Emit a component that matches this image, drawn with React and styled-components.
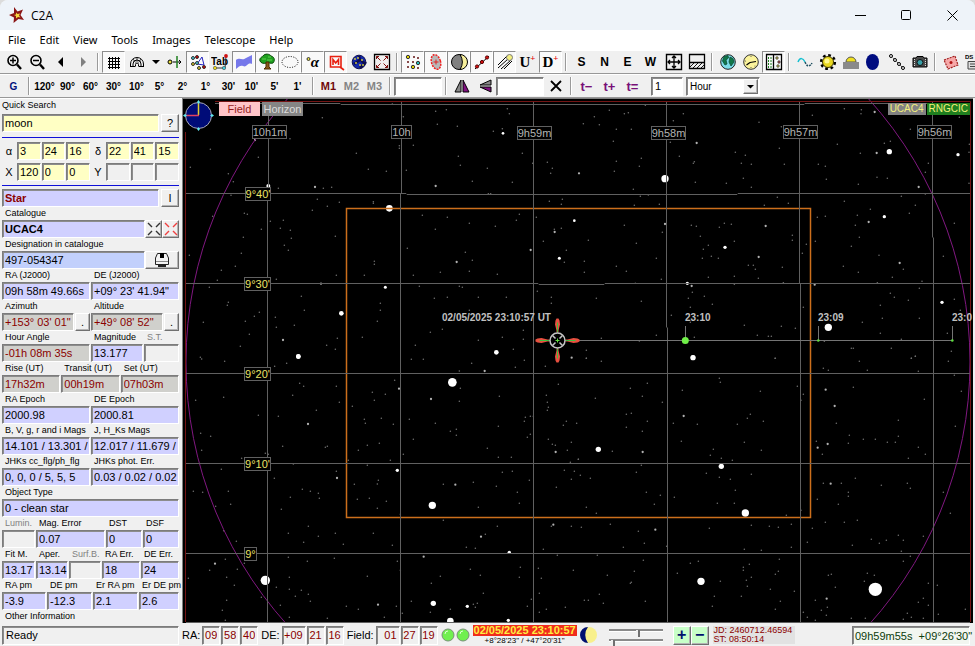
import React from "react";
import styled, { createGlobalStyle } from "styled-components";

const GlobalStyle = createGlobalStyle`
  * { box-sizing: border-box; }
  body {
    margin: 0;
    background-color: #dcdcdc;
    font-family: "Liberation Sans", Arial, sans-serif;
    font-size: 11px;
    color: #000;
  }
  button, input, select { font-family: inherit; margin: 0; }
`;

const Window = styled.div`
  display: grid;
  grid-template-rows: 30px 20px 24px 24px 1fr 22px;
  min-height: 100vh;
  background-color: #f0f0f0;
  border-radius: 8px 8px 0 0;
  overflow: hidden;
`;

const TitleBar = styled.header`
  display: flex;
  align-items: center;
  padding-left: 9px;
  background-color: #eef3f9;
`;

const Title = styled.h1`
  flex: 1;
  margin: 0 0 0 6px;
  font-family: "Open Sans", "Noto Sans", sans-serif;
  font-size: 12px;
  font-weight: 400;
`;

const Caption = styled.button`
  display: flex;
  align-items: center;
  justify-content: center;
  width: 46px;
  height: 30px;
  padding: 0;
  border: none;
  background: none;
`;

const MenuBar = styled.nav`
  display: flex;
  align-items: center;
  gap: 14px;
  padding-left: 8px;
  background-color: #fff;
`;

const MenuItem = styled.button`
  padding: 0;
  border: none;
  background: none;
  font-family: "Noto Sans", "Open Sans", sans-serif;
  font-size: 11px;
  line-height: 20px;
`;

const ToolBar = styled.div`
  display: flex;
  align-items: center;
  min-width: 0;
  padding-left: 2px;
  overflow: hidden;
  border-top: 1px solid #fff;
  border-bottom: 1px solid #989898;
`;

const ToolButton = styled.button`
  display: flex;
  flex: none;
  align-items: center;
  justify-content: center;
  width: ${p => (p.$narrow ? 15 : 23)}px;
  height: 22px;
  padding: 0;
  border: 1px solid;
  border-color: ${p => (p.$on ? "#8c8c8c #fff #fff #8c8c8c" : "transparent")};
  background-color: ${p => (p.$on ? "#f9f9f9" : "transparent")};
  color: ${p => p.$color || "#000"};
  font-size: ${p => p.$size || 10}px;
  font-weight: 700;
  white-space: nowrap;
  ${p => p.$serif && 'font-family: "Liberation Serif", serif;'}

  i { font-size: 15px; }
  sup {
    align-self: flex-start;
    color: #e00000;
    font-size: 9px;
    line-height: 12px;
  }
`;

const Separator = styled.span`
  flex: none;
  width: 2px;
  height: 18px;
  margin: 0 3px;
  border-left: 1px solid #9a9a9a;
  border-right: 1px solid #fff;
`;

const sunken = `
  border: 1px solid;
  border-color: #7c7c7c #fff #fff #7c7c7c;
  border-radius: 0;
  box-shadow: inset 1px 1px #8c8c8c;
`;

const raised = `
  border: 1px solid;
  border-color: #fff #707070 #707070 #fff;
  border-radius: 0;
  box-shadow: inset -1px -1px #b4b4b4;
`;

const ToolInput = styled.input`
  ${sunken}
  flex: none;
  width: ${p => p.$w}px;
  height: 19px;
  padding: 0 3px;
  font-size: 11px;
  background-color: #fff;
`;

const UnitPicker = styled.div`
  ${sunken}
  display: flex;
  flex: none;
  position: relative;
  width: 74px;
  height: 19px;
  margin-left: 3px;
  background-color: #fff;

  svg {
    ${raised}
    position: absolute;
    top: 1px;
    right: 1px;
    width: 15px;
    height: 15px;
    background-color: #f0f0f0;
    pointer-events: none;
  }
`;

const UnitSelect = styled.select`
  appearance: none;
  width: 100%;
  padding: 0 3px;
  border: none;
  background: none;
  font-size: 10px;
`;

const Gap = styled.span`
  flex: none;
  width: 7px;
`;

const Body = styled.div`
  display: grid;
  grid-template-columns: 182px 1fr;
`;

const Panel = styled.aside`
  padding: 0 3px 0 2px;
  border-top: 1px solid #fff;
`;

const Section = styled.section`
  padding-bottom: ${p => p.$pb}px;
  margin-bottom: ${p => p.$mb}px;
  border-bottom: 1px solid #1010d8;
`;

const Row = styled.div`
  display: grid;
  grid-template-columns: ${p => p.$cols || "1fr 1fr"};
  gap: ${p => p.$gap ?? 1}px;
  align-items: end;
`;

const CoordRow = styled(Row)`
  align-items: center;
  text-align: center;
  & + & { margin-top: 3px; }
`;

const Cell = styled.label`
  display: block;
  min-width: 0;
`;

const FieldName = styled.span`
  display: block;
  height: 13px;
  padding-left: 3px;
  font-size: 9px;
  line-height: 12px;
  white-space: nowrap;
  color: ${p => (p.$off ? "#808080" : "#000")};
`;

const SearchName = styled(FieldName)`
  height: 15px;
  padding-left: 0;
`;

const tones = {
  blue: "#d0d0ff",
  sky: "#c2d0fc",
  gray: "#d0d0cc",
  yellow: "#ffffc4",
  off: "#f0f0f0",
};

const Box = styled.input`
  ${sunken}
  display: block;
  width: 100%;
  min-width: 0;
  height: 18px;
  padding: 0 0 0 2px;
  font-size: 11px;
  font-weight: ${p => (p.$bold ? 700 : 400)};
  color: ${p => (p.$red ? "#8b0000" : "#000")};
  background-color: ${p => tones[p.$tone || "blue"]};
`;

const PushButton = styled.button`
  ${raised}
  display: flex;
  align-items: center;
  justify-content: center;
  width: 100%;
  height: 18px;
  padding: 0;
  font-size: 11px;
  background-color: #f0f0f0;
`;

const Sky = styled.main`
  position: relative;
  min-width: 0;
  margin: 0 2px 1px 0;
  border-left: 1px solid #808080;
  border-top: 1px solid #808080;
  background-color: #000;
`;

const Chart = styled.svg`
  position: absolute;
  inset: 0;
  width: 100%;
  height: 100%;
`;

const Overlay = styled.div`
  position: absolute;
  display: flex;
  gap: ${p => (p.$right ? 1 : 2)}px;
  ${p => (p.$right ? "right: 3px; top: 4px;" : "left: 36px; top: 3px;")}
`;

const SkyTab = styled.button`
  width: 41px;
  height: 14px;
  padding: 0;
  border: none;
  font-size: 11px;
  line-height: 14px;
  color: ${p => (p.$on ? "#941c1c" : "#dcdcdc")};
  background-color: ${p => (p.$on ? "#ffc4c8" : "#858585")};
`;

const Badge = styled.span`
  padding: 0 2px;
  font-size: 10px;
  line-height: 12px;
  color: #f4f07c;
  background-color: ${p => (p.$green ? "#1f7f1f" : "#828282")};
`;

const StatusBar = styled.footer`
  display: flex;
  align-items: center;
  min-width: 0;
  padding: 0 5px 0 2px;
  overflow: hidden;
  white-space: nowrap;
`;

const Ready = styled.div`
  ${sunken}
  flex: none;
  width: 177px;
  height: 19px;
  padding-left: 3px;
  line-height: 17px;
`;

const StatusGroup = styled.div`
  display: flex;
  flex: none;
  align-items: center;
  gap: 1px;
  margin-left: 3px;

  label { margin-right: 1px; }
`;

const StatusBox = styled(Box)`
  width: ${p => p.$w}px;
  height: 19px;
  text-align: right;
  padding: 0 2px 0 0;
`;

const Clock = styled.div`
  flex: none;
  width: 104px;
  margin-left: 3px;
  text-align: center;
  font-size: 8px;
  line-height: 9px;
`;

const ClockDate = styled.div`
  font-size: 11px;
  font-weight: 700;
  line-height: 11px;
  color: #ffee40;
  background-color: #f02c1c;
`;

const Sliders = styled.div`
  display: flex;
  flex: none;
  flex-direction: column;
  width: 54px;
  margin: 0 10px 0 11px;
`;

const Slider = styled.input`
  appearance: none;
  width: 100%;
  height: 10px;
  background: none;

  &::-webkit-slider-runnable-track {
    height: 3px;
    border-top: 2px solid #8a8a8a;
    border-bottom: 1px solid #fff;
  }
  &::-webkit-slider-thumb {
    appearance: none;
    width: 4px;
    height: 7px;
    margin-top: -1px;
    background-color: #f0f0f0;
    border-right: 2px solid #707070;
  }
`;

const StepButton = styled(PushButton)`
  flex: none;
  width: 18px;
  height: 19px;
  font-size: 16px;
  font-weight: 700;
  color: #00106c;
  background-color: #c8ffc8;
`;

const Julian = styled.div`
  flex: none;
  width: 82px;
  margin-left: 4px;
  padding-left: 1px;
  font-size: 9px;
  line-height: 9px;
  color: #8b0000;
  background-color: #e2e2e2;
`;

const Cursor = styled.output`
  ${sunken}
  flex: none;
  width: 118px;
  height: 19px;
  margin-left: auto;
  padding-left: 2px;
  line-height: 18px;
  color: #0c3c0c;
  background-color: #f2f6f0;
  white-space: pre;
`;

// ---- icons ----

const Icon = ({ children, size = 18 }) => (
  <svg width={size} height={size} viewBox="0 0 18 18" fill="none" stroke="#000" aria-hidden="true">
    {children}
  </svg>
);

const Dots = ({ pts, r = 1.5, fill, line = "none" }) =>
  pts.map(([x, y, f]) => <circle key={x + "-" + y} cx={x} cy={y} r={r} fill={f || fill} stroke={line} />);

const Logo = () => (
  <svg width="16" height="18" viewBox="0 0 16 18" aria-hidden="true">
    <path d="M5 1L8.500 5.500L14 3.500L11.500 9L15 14L9.500 13L4.500 17L5 11.500L0 9L5 7Z" fill="#8b1616" />
    <path d="M7 6.500L8.500 8L11 7.500L10 9.500L11.500 11.500L9 11L7 12.500L7 10L5 9L7 8.500Z" fill="#f5d940" />
  </svg>
);

const Zoom = ({ plus }) => (
  <Icon>
    <circle cx="8" cy="7.500" r="5" strokeWidth="1.600" />
    <path d="M12 11.500L16 16" strokeWidth="2.400" />
    <path d={plus ? "M5 7.500H11M8 4.500V10.500" : "M5 7.500H11"} strokeWidth="1.500" />
  </Icon>
);

const Grid = () => (
  <Icon><path d="M3 5.500H15M3 8.500H15M3 11.500H15M3 14.500H15M4.500 4V16M7.500 4V16M10.500 4V16M13.500 4V16" /></Icon>
);

const Dome = () => (
  <Icon>
    <path d="M2 13.500H7.500M10.500 13.500H16M2.500 13V11A6.500 6.500 0 0 1 15.500 11V13M5 13V11A4 4 0 0 1 13 11V13M7.500 13V11.500A1.500 1.500 0 0 1 10.500 11.500V13" />
    <path d="M9 5V9M5 6L7.500 9.500M13 6L10.500 9.500" strokeWidth="0.700" />
  </Icon>
);

const Constellation = () => (
  <Icon>
    <path d="M8 11L13 4L15 12L8 11" stroke="#2020c0" />
    <Dots pts={[[4, 5, "#40c8d8"], [8, 4, "#c00"], [4, 11, "#d8c820"], [10, 15, "#d8c820"], [15, 14, "#c00"], [8, 10, "#40c8d8"]]} r={1.5} line="#333" />
  </Icon>
);

const Tab = () => (
  <svg width="19" height="18" viewBox="0 0 19 18" aria-hidden="true">
    <text x="0" y="12" fontSize="10" fontWeight="700" fontFamily="Liberation Sans">Tab</text>
    <path d="M4 15H14L15 3" stroke="#333" fill="none" />
    <circle cx="4" cy="15" r="1.700" fill="#e8d820" stroke="#333" strokeWidth="0.500" />
    <circle cx="13" cy="15" r="1.700" fill="#40c8d8" stroke="#333" strokeWidth="0.500" />
    <circle cx="15" cy="3" r="1.900" fill="#d01010" />
  </svg>
);

const Flag = () => (
  <Icon><path d="M1 7C5 4 7 8 11 5L17 2V11C12 9 12 15 8 13C6 12 4 13 1 16Z" fill="#7678ea" stroke="none" /></Icon>
);

const Tree = () => (
  <Icon>
    <path d="M2 8C1 5 4 4 5 3C7 0 12 1 13 3C17 4 17 8 15 10C12 11 11 9 9 10C5 11 3 10 2 8Z" fill="#1fa01f" stroke="#0a4a0a" />
    <path d="M8 9H11V14L13 16H6L8 14Z" fill="#8a5a18" stroke="#4a2a00" />
    <path d="M4 6H8M10 4H13M9 7H14" stroke="#60d050" />
  </Icon>
);

const MFrame = () => (
  <Icon>
    <path d="M3.500 3.500H14V14H3.500ZM13 14L17 17" stroke="#e82010" strokeWidth="1.600" />
    <path d="M6 12V6.500L8.700 10L11.500 6.500V12" stroke="#e82010" strokeWidth="1.600" />
  </Icon>
);

const NightSky = () => (
  <Icon>
    <circle cx="9" cy="9" r="6.800" fill="#1428a8" stroke="#101050" />
    <path d="M4 11L10 7L9 3M11 8L15 10L10 15" stroke="#0c0c50" strokeWidth="2.500" />
    <Dots pts={[[5, 6], [8, 5], [12, 7], [6, 10], [10, 12], [13, 12]]} r={0.9} fill="#e0d840" />
  </Icon>
);

const Expand = () => (
  <Icon>
    <path d="M1.500 1.500H16.500V16.500H1.500Z" strokeWidth="1.300" />
    <path d="M3.500 6V3.500H6M3.500 3.500L7.500 7.500M12 3.500H14.500V6M14.500 3.500L10.500 7.500M3.500 12V14.500H6M3.500 14.500L7.500 10.500M12 14.500H14.500V12M14.500 14.500L10.500 10.500" stroke="#801010" />
  </Icon>
);

const Rays = ({ color }) => (
  <svg width="14" height="14" viewBox="0 0 14 14" stroke={color} strokeWidth="1.400" aria-hidden="true">
    <path d="M1 1L5 5M13 1L9 5M1 13L5 9M13 13L9 9" />
  </svg>
);

const StarField = () => (
  <Icon>
    <Dots pts={[[4, 4, "#e0d000"], [14, 10, "#20b8b8"], [9, 14, "#e0d000"]]} r={1.7} line="#333" />
    <Dots pts={[[10, 4], [9, 9], [4, 9], [4, 14], [14, 15], [14, 5]]} r={1} fill="#601010" />
  </Icon>
);

const Galaxy = () => (
  <Icon>
    <ellipse cx="9" cy="9" rx="4.500" ry="7.500" transform="rotate(-16 9 9)" fill="#b8b8b8" stroke="#f02020" strokeDasharray="2 1" strokeWidth="1.500" />
    <path d="M9 6.500V11.500M6.500 9H11.500" stroke="#e02020" />
  </Icon>
);

const Phase = () => (
  <Icon>
    <circle cx="9" cy="9" r="7.500" fill="#808080" />
    <path d="M10 1.500A7.500 7.500 0 0 1 10 16.500A14 14 0 0 0 10 1.500Z" fill="#f8f09c" />
  </Icon>
);

const Trail = ({ plain }) => (
  <Icon>
    {plain ? (
      <>
        <path d="M2 2L16 16" strokeDasharray="1 1" />
        <Dots pts={[[3, 3], [7, 7], [11, 11], [15, 15]]} r={1.5} fill="#f0f0f0" line="#000" />
      </>
    ) : (
      <>
        <path d="M2 16L16 3" />
        <Dots pts={[[4, 13.5], [9, 9], [14, 4.5]]} r={1.6} fill="#e01010" line="#500" />
      </>
    )}
  </Icon>
);

const Comet = () => (
  <Icon>
    <path d="M2 12L11 3M2 15L12 6M5 16L15 7M8 16L16 8" />
    <circle cx="13.500" cy="4.500" r="3" fill="#f4f080" stroke="#777" />
  </Icon>
);

const Pan = () => (
  <Icon>
    <path d="M1.500 1.500H16.500V16.500H1.500Z" strokeWidth="1.400" />
    <path d="M9 3V15M3 9H15M7 5L9 3L11 5M7 13L9 15L11 13M5 7L3 9L5 11M13 7L15 9L13 11" strokeWidth="1.300" />
  </Icon>
);

const Horizon = () => (
  <Icon>
    <path d="M1.500 1.500H16.500V15.500H1.500ZM1.500 9.500H16.500" strokeWidth="1.300" />
    <path d="M2 14L6 10M5 15L10 10M9 15L14 10M13 15L16 12" strokeWidth="0.900" />
  </Icon>
);

const Globe = () => (
  <Icon>
    <circle cx="9" cy="9" r="7.300" fill="#7cdce8" stroke="#222" />
    <path d="M5 3.500L9 2.500L9.500 5L7 7L8 11L6 12L3.500 8ZM11 4L14 5.500L15 9L12 13L10 9Z" fill="#107848" stroke="#0c4c38" strokeWidth="0.800" />
  </Icon>
);

const ClockIcon = () => (
  <Icon>
    <circle cx="9" cy="9" r="7.300" fill="#fcf49c" stroke="#333" />
    <path d="M8 9.500L14 8.500M8 9.500L4.500 12" strokeWidth="1.200" />
    <Dots pts={[[9, 3.5], [9, 14.5], [3.5, 8], [13, 13]]} r={0.6} fill="#555" />
  </Icon>
);

const PanelIcon = () => (
  <Icon>
    <path d="M1.500 1.500H16.500V16.500H1.500ZM8.500 2V16" strokeWidth="1.300" />
    <path d="M3.500 4V15M6 4V15" stroke="#208020" strokeDasharray="2 1" />
    <Dots pts={[[12, 5, "#d8c820"], [14, 9, "#b01010"], [13, 13, "#d8c820"]]} r={1.2} line="#555" />
  </Icon>
);

const Curve = () => (
  <Icon>
    <path d="M2 9C4 4 7 5 9 9" stroke="#18c0d0" strokeWidth="1.500" />
    <path d="M9 9C11 14 14 14 16 10" stroke="#205060" strokeDasharray="2 1" strokeWidth="1.500" />
  </Icon>
);

const Sun = () => (
  <Icon>
    <circle cx="9" cy="9" r="6.800" strokeWidth="2.600" strokeDasharray="2.700 2.640" />
    <circle cx="9" cy="9" r="5.500" fill="#e8d820" stroke="#403800" />
    <circle cx="8" cy="8" r="2.500" fill="#fff890" stroke="none" />
  </Icon>
);

const Sunrise = () => (
  <Icon>
    <path d="M4 9A5 5 0 0 1 14 9Z" fill="#f0e020" stroke="#555" />
    <path d="M1 9H17V16H1Z" fill="#8a8a8a" stroke="none" />
  </Icon>
);

const Night = () => (
  <Icon><ellipse cx="7.500" cy="9" rx="6.500" ry="8" fill="#000c80" stroke="none" /></Icon>
);

const Camera = () => (
  <Icon>
    <path d="M2 5H5L6 3.500H12L13 5H16V14H2Z" fill="#4a4a4a" />
    <path d="M3.500 6V13M14.500 6V13" stroke="#ddd" strokeDasharray="1 1" />
    <circle cx="9" cy="9.500" r="3" fill="#38a0a8" stroke="#111" />
  </Icon>
);

const Ccd = () => (
  <Icon>
    <path d="M2 7L13 3L16 12L6 16Z" fill="#f6a8a8" stroke="#a02020" strokeDasharray="2 1" strokeWidth="1.200" />
    <circle cx="9" cy="9.500" r="1.500" fill="#b01010" stroke="none" />
  </Icon>
);

const Dss = () => (
  <Icon>
    <text x="0" y="6" fontSize="6" fontWeight="700" fill="#000" stroke="none">DS</text>
    <path d="M3 8.500H15V16H3ZM5 11H13M5 13.500H13" fill="#ddd" stroke="#444" />
  </Icon>
);

const FlipH = () => (
  <Icon>
    <path d="M8 3V15H2Z" fill="#888" />
    <path d="M10 3V15H16Z" fill="#801080" />
  </Icon>
);

const FlipV = () => (
  <Icon>
    <path d="M15 3V8H4Z" fill="#888" />
    <path d="M15 15V10H4Z" fill="#801080" />
  </Icon>
);

const Printer = () => (
  <svg width="18" height="16" viewBox="0 0 18 16" aria-hidden="true">
    <path d="M4.500 1.500H13.500L15.500 6V12.500H2.500V6Z" fill="#f4f4f4" stroke="#222" />
    <path d="M7 1H11V6H7Z" fill="#000" />
    <path d="M3 9.500H15" stroke="#888" />
    <path d="M5 14H13" stroke="#222" strokeWidth="2" />
  </svg>
);

const MoonPhase = () => (
  <svg width="18" height="18" viewBox="0 0 18 18" aria-hidden="true">
    <circle cx="9" cy="9" r="8" fill="#f8f08c" />
    <path d="M8 1A8 8 0 0 0 8 17A13 13 0 0 1 8 1Z" fill="#001070" />
  </svg>
);

const Lamp = () => (
  <svg width="14" height="14" viewBox="0 0 14 14" aria-hidden="true">
    <circle cx="7" cy="7" r="6" fill="#70f050" stroke="#789078" />
    <path d="M4 6A3 3 0 0 1 7 3" stroke="#e0ffd8" fill="none" />
  </svg>
);

// ---- sky chart ----

// Four plates, three units to a chart pixel
const plates = [
  {
    at: [180, 96],
    faint: "427,65 330,128 91,160 235,184 31,214 145,233 160,257 153,298 295,277 430,277 455,274 412,310 442,331 478,319 397,343 193,352 202,355 271,376 310,373 98,361 244,400 301,397 331,403 334,427 190,424 313,448 325,463 184,472 28,478 166,511 124,523 112,553 289,550 88,574 364,601 145,619 142,628 238,649 223,661 286,664 70,679 196,676 289,694 343,688 208,715 181,751 61,784 373,643 469,538 466,421 529,172 565,220 619,226 679,223 700,148 658,149 658,157 767,46 799,41 772,85 832,91 982,38 988,53 940,106 967,98 835,181 841,208 922,217 877,256 997,259 1027,172 1102,199 1117,217 1058,202 1112,232 580,317 580,322 727,358 802,364 868,382 766,400 946,391 1018,355 1009,373 1069,364 1108,316 1147,310 1144,325 1090,436 1144,397 682,457 583,496 583,505 856,469 877,493 781,529 868,526 952,535 553,538 700,538 718,571 763,607 802,604 838,571 847,574 895,604 979,604 1072,586 1159,463 1153,499 1114,604 601,622 601,643 592,676 547,724 472,727 440,748 466,760 787,700 751,709 706,748 868,643 895,733 967,724 1030,703 1030,730 1000,760 1114,622 670,62 637,24 925,293 932,293 1123,400",
    mid: "225,132 405,273 767,270 830,498 1124,408 1052,462 423,563 309,732 1175,785",
    bright: "969,112,4 265,270,6 628,337,10 616,574,4.500 484,652,7 355,781,7 949,769,7 1138,487,4.500 1183,374,4",
  },
  {
    at: [575, 96],
    faint: "103,43 148,53 160,50 58,62 25,83 73,86 124,100 169,100 295,74 325,53 211,28 115,136 286,139 313,181 355,202 358,197 199,187 193,211 124,196 118,226 361,259 175,280 196,301 178,328 253,325 220,297 552,79 712,58 619,92 613,157 481,169 511,178 499,202 529,205 628,205 454,262 505,247 529,274 568,328 607,304 640,322 730,205 751,211 787,145 754,250 808,38 859,41 858,53 1006,100 928,142 946,136 856,172 906,244 937,247 850,265 1060,202 1051,229 1051,294 1183,145 1182,169 1182,262 1153,64 808,316 979,301 1021,328 1003,352 847,358 841,388 886,340 751,361 727,364 853,424 829,451 912,478 805,511 850,529 985,520 952,544 907,560 1041,556 1138,382 1105,481 349,388 364,391 433,394 448,382 469,385 376,421 478,436 400,448 385,460 382,487 409,481 430,487 520,508 535,508 541,520 550,547 478,541 478,565 400,544 622,514 652,418 652,433 694,445 721,436 682,472 625,560 40,433 184,442 148,388 28,496 28,529 124,511 154,526 259,550 181,562 244,487 262,409 64,607 199,616 289,658 244,718 352,589 340,607 388,601 412,625 346,634 346,679 79,727 358,724 508,688 547,718 580,721 589,721 619,691 661,697 685,634 916,628 946,592 958,604 1000,613 922,667 862,679 916,712 979,730 949,757 829,757 835,757 1033,577 1033,667 1138,610 1156,643 1117,712 1129,766 1021,781 1009,787 34,763 34,787 600,787 748,736 193,735",
    mid: "12,232 365,141 270,384 572,390 551,483 350,570 899,48 905,171 1031,273 881,378 974,501 719,566",
    bright: "270,248,11 943,167,8 1149,176,5 928,362,5 450,454,5 337,562,5 1101,619,5 760,694,11 354,785,7",
  },
  {
    at: [180, 355],
    faint: "65,12 134,19 320,25 284,34 359,85 371,94 338,121 469,94 409,166 478,142 47,136 131,127 235,181 295,184 62,235 92,244 65,286 308,274 436,277 442,274 256,295 265,298 185,310 124,343 145,409 68,412 40,409 152,448 107,454 283,370 367,403 391,409 415,415 418,430 331,427 304,463 469,349 340,327 385,514 325,535 415,544 371,562 466,535 490,568 325,607 382,619 463,610 131,527 169,559 136,613 193,625 89,646 172,643 25,670 140,667 163,691 328,667 289,697 328,703 364,706 346,724 385,718 391,739 244,727 140,736 127,766 301,751 328,787 136,796 442,790 499,754 535,763 694,13 730,13 875,25 838,48 1006,37 1033,16 1096,34 958,124 838,139 841,100 644,76 616,118 577,112 583,136 517,154 553,193 556,205 604,190 640,208 688,193 766,205 811,229 829,223 829,241 700,253 670,298 562,271 598,265 535,286 562,331 631,316 505,316 523,388 532,433 568,430 619,439 592,460 595,376 592,387 790,388 880,382 949,394 967,352 997,349 955,307 994,307 922,280 955,214 1036,187 1033,199 1051,184 1060,184 1051,238 1042,247 1105,253 1117,268 1126,271 1150,211 1159,199 1162,286 1174,262 1171,322 1153,346 1183,349 1129,397 1048,376 1012,412 1018,445 895,457 790,496 952,514 580,535 637,571 652,619 661,646 859,577 886,580 916,538 871,643 901,661 781,664 754,685 562,664 910,715 1018,667 1021,637 1090,583 1132,601 1084,670 1075,640 1078,715 1054,733 1180,646 1099,763 1078,772 1156,757 1042,754 880,748 892,745 886,757 811,763 751,772 694,739 649,754 667,775 613,787 1174,514 1114,514 1099,121 1102,142 1105,157 1102,166 1135,88 1190,205 1195,313 1174,373 661,478",
    mid: "384,207 471,369 105,626 657,101 914,48 753,132 1127,291 826,389 903,545 731,605 594,749 1120,509",
    bright: "355,5,7 817,82,13 652,346,5 757,451,11 256,676,14 760,745,8 862,754,5 811,798,10 988,592,5 985,796,5",
  },
  {
    at: [575, 355],
    faint: "34,10 79,19 601,10 166,100 217,85 202,124 262,142 61,130 154,178 169,175 154,217 217,199 202,229 112,289 10,313 199,331 184,352 16,361 46,370 214,412 256,421 238,448 34,457 64,475 106,508 19,517 190,529 208,565 145,577 275,574 67,601 205,616 178,649 97,661 166,685 169,682 73,718 85,745 28,736 40,736 211,739 433,70 436,82 322,106 556,109 667,94 685,118 678,136 526,178 517,190 565,199 487,208 367,208 295,205 319,259 508,262 559,286 415,283 406,301 439,310 472,316 394,355 433,367 466,373 529,358 481,406 427,445 478,445 298,427 634,481 678,466 403,520 529,511 583,514 610,517 649,508 712,520 697,562 649,577 508,583 559,586 346,625 370,619 307,655 505,637 505,646 523,628 529,667 514,676 517,694 499,724 586,703 601,658 610,649 613,613 658,709 616,739 601,763 418,724 412,754 436,679 853,19 745,40 760,46 877,46 1009,10 1021,4 1030,49 1120,19 1138,61 1159,109 1141,214 1048,133 835,97 784,205 823,241 820,265 865,253 901,253 937,262 961,262 970,244 970,196 1030,277 1051,298 1000,310 742,298 724,259 841,370 799,385 745,385 820,412 820,424 727,433 790,448 919,391 997,385 1006,400 1105,412 1126,475 847,496 808,502 751,502 832,571 889,553 913,565 934,556 970,541 985,556 1045,544 979,589 1006,604 985,619 877,655 898,661 868,679 769,658 760,661 781,697 721,736 739,766 757,757 754,781 685,772 1060,685 1087,691 1045,730 1060,751 1030,742 1090,778 997,775 1009,787 1171,763 985,793 829,790 871,790 697,787 721,796 1045,790",
    mid: "326,183 203,291 752,104 779,153 758,267 728,278 767,386 241,524 755,731",
    bright: "354,8,8 70,283,8 439,334,8 511,474,11 378,679,11 901,703,20",
  },
];

const Plate = ({ at, faint, mid, bright }) => (
  <g transform={`translate(${at[0]} ${at[1]}) scale(${1 / 3})`}>
    {faint.split(" ").map(s => {
      const [x, y] = s.split(",");
      return <circle key={s} cx={x} cy={y} r="2.300" fill="#707070" />;
    })}
    {mid.split(" ").map(s => {
      const [x, y] = s.split(",");
      return <circle key={s} cx={x} cy={y} r="3.400" fill="#b0b0b0" />;
    })}
    {bright.split(" ").map(s => {
      const [x, y, r] = s.split(",");
      return <circle key={s} cx={x} cy={y} r={r} fill="#fff" />;
    })}
  </g>
);

const raLabels = [
  ["10h1m", 252, 125, 35], ["10h", 391, 125, 21], ["9h59m", 517, 126, 35],
  ["9h58m", 651, 126, 35], ["9h57m", 783, 125, 35], ["9h56m", 917, 125, 35],
];

const decLabels = [
  ["9°40'", 245, 187, 26], ["9°30'", 244, 277, 27], ["9°20'", 244, 367, 27],
  ["9°10'", 244, 457, 27], ["9°", 244, 547, 13],
];

const Tag = ({ label: [text, x, y, w], fill }) => (
  <g>
    <rect x={x + 0.5} y={y + 0.5} width={w - 1} height="13" fill="#000" stroke="#606060" />
    <text x={x + w / 2} y={y + 11} textAnchor="middle" fontSize="11" fill={fill}>{text}</text>
  </g>
);

const SkyChart = () => (
  <Chart viewBox="183 99 790 524" preserveAspectRatio="xMidYMid slice" role="img" aria-label="Sky chart">
    {plates.map(p => <Plate key={p.at.join()} {...p} />)}
    <circle cx="578" cy="362" r="392" fill="none" stroke="#801880" />
    <path d="M346.500 208.500H810.500V517.500H346.500Z" fill="none" stroke="#cc6f1c" strokeWidth="1.500" />
    <g fill="none" stroke="#606060">
      <path d="M268.500 102V193.500L267.500 194V622M401.500 102V193.500L400.500 194V622M533.500 102V622M666.500 102V327L667.500 328V622M799.500 102V283L800.500 284V622M932.500 102V237L933.500 238V622" />
      <path d="M215 103.500H340L341 104.500H804L805 103.500H970M186 193.500H406L407 194.500H737L738 193.500H970M186 283.500H538L539 284.500H604L605 283.500H970M186 373.500H970M186 463.500H970M186 553.500H970M186 622.500H970" />
      <path d="M578 340.500H953M685.500 326V340M818.500 326V340M952.500 326V340" stroke="#747474" />
    </g>
    <path d="M185.500 132V622M215 101.500H970.500V622" fill="none" stroke="#741414" />
    {raLabels.map(l => <Tag key={l[0]} label={l} fill="#b4b4b4" />)}
    {decLabels.map(l => <Tag key={l[0]} label={l} fill="#ece468" />)}

    <g fontSize="10" fontWeight="700" fill="#c0c0c0">
      <text x="442" y="321">02/05/2025 23:10:57 UT</text>
      <text x="685" y="321">23:10</text>
      <text x="818" y="321">23:09</text>
      <text x="952" y="321">23:0</text>
    </g>
    <circle cx="685.300" cy="340.500" r="3.500" fill="#70f048" />
    <circle cx="818.300" cy="340.500" r="1.300" fill="#60e040" />
    <circle cx="952.300" cy="340.500" r="1.300" fill="#60e040" />

    <g transform="translate(557.500 340.500)">
      {[0, 90, 180, 270].map(a => (
        <g key={a} transform={`rotate(${a})`}>
          <path d="M-2.500 -16L-2 -20L-1 -22H1L2 -20L2.500 -16L1 -10V-8H-1V-10Z" fill="#e85040" />
          <path d="M0 -18V-8" stroke="#40c040" />
        </g>
      ))}
      <circle r="7.500" fill="#000" stroke="#c4c4c4" strokeWidth="1.500" />
      <path d="M-5 -5L-2 -2M5 -5L2 -2M-5 5L-2 2M5 5L2 2" stroke="#c4c4c4" strokeWidth="1.500" />
      <path d="M-2 0H2M0 -2V2" stroke="#60e040" />
    </g>

    <g>
      <circle cx="198.500" cy="115.500" r="13" fill="#000c78" stroke="#a8a8b8" />
      <path d="M198.500 103V115" stroke="#e0d030" strokeWidth="1.500" />
      <path d="M186 115.500H199" stroke="#e04060" strokeWidth="1.500" />
      <path d="M198.500 100L200 102L198.500 104L197 102ZM198.500 127L200 129L198.500 131L197 129ZM183 115.500L185 114L187 115.500L185 117ZM210 115.500L212 114L214 115.500L212 117Z" fill="#60e8f0" />
    </g>
  </Chart>
);

// ---- parts ----

const Tool = ({ name, children, on, ...rest }) => (
  <ToolButton type="button" aria-label={name} title={name} $on={on} {...rest}>{children}</ToolButton>
);

const Field = ({ label, value = "", tone, red, bold }) => (
  <Cell>
    <FieldName $off={tone === "off"}>{label}</FieldName>
    <Box defaultValue={value} readOnly $tone={tone} $red={red} $bold={bold} />
  </Cell>
);

const Coords = ({ sets }) => (
  <CoordRow $cols="14px 1fr 1fr 1fr 14px 1fr 1fr 1fr">
    {sets.map(([name, values]) => (
      <React.Fragment key={name}>
        <span>{name}</span>
        {values.map((v, i) => (
          <Box key={i} aria-label={`${name} ${i + 1}`} defaultValue={v} $tone={v === "" ? "off" : "yellow"} />
        ))}
      </React.Fragment>
    ))}
  </CoordRow>
);

const StatusSet = ({ label, id, values, wide = 18 }) => (
  <StatusGroup>
    <label htmlFor={id}>{label}</label>
    {values.map((v, i) => (
      <StatusBox key={i} id={i ? undefined : id} aria-label={i ? `${label} ${i + 1}` : undefined}
        defaultValue={v} $tone="off" $red $w={i === 0 ? wide : 18} />
    ))}
  </StatusGroup>
);

const MainTools = () => (
  <ToolBar role="toolbar" aria-label="Main">
    <Tool name="Zoom in"><Zoom plus /></Tool>
    <Tool name="Zoom out"><Zoom /></Tool>
    <Tool name="Back"><Icon><path d="M12 4V14L7 9Z" fill="#000" stroke="none" /></Icon></Tool>
    <Tool name="Forward"><Icon><path d="M7 4V14L12 9Z" fill="#808080" stroke="none" /></Icon></Tool>
    <Separator />
    <Tool name="Grid" on><Grid /></Tool>
    <Tool name="Dome"><Dome /></Tool>
    <Tool name="Grid options" $narrow><svg width="8" height="5"><path d="M0 0H8L4 4Z" /></svg></Tool>
    <Tool name="Centre">
      <Icon><circle cx="4" cy="9" r="2" fill="#e8e040" /><path d="M7 9H15M13 7L15 9L13 11" /><path d="M11 3V15" stroke="#208020" strokeWidth="1.500" /></Icon>
    </Tool>
    <Tool name="Constellations" on><Constellation /></Tool>
    <Tool name="Labels"><Tab /></Tool>
    <Tool name="Milky way" on><Flag /></Tool>
    <Tool name="Landscape" on><Tree /></Tool>
    <Tool name="Outlines" on>
      <Icon><ellipse cx="9" cy="9" rx="8" ry="5.500" strokeDasharray="1 1.500" /></Icon>
    </Tool>
    <Tool name="Star names" on $serif $size={15}>
      <svg width="5" height="12"><circle cx="2.500" cy="3" r="1.500" fill="#e8e040" stroke="#333" /></svg><i>α</i>
    </Tool>
    <Tool name="Messier" on><MFrame /></Tool>
    <Tool name="Night sky"><NightSky /></Tool>
    <Tool name="Fit"><Expand /></Tool>
    <Separator />
    <Tool name="Stars" on><StarField /></Tool>
    <Tool name="Deep sky" on><Galaxy /></Tool>
    <Tool name="Planets" on><Phase /></Tool>
    <Tool name="Asteroids" on><Trail /></Tool>
    <Tool name="Comets" on><Comet /></Tool>
    <Tool name="User catalogues" $serif $size={15}>U<sup>+</sup></Tool>
    <Tool name="Double stars" on $serif $size={15}>D<sup>+</sup></Tool>
    <Separator />
    {["S", "N", "E", "W"].map(d => <Tool key={d} name={d} $size={12}>{d}</Tool>)}
    <Tool name="Pan"><Pan /></Tool>
    <Tool name="Horizon"><Horizon /></Tool>
    <Separator />
    <Tool name="Location"><Globe /></Tool>
    <Tool name="Time"><ClockIcon /></Tool>
    <Tool name="Panel" on><PanelIcon /></Tool>
    <Separator />
    <Tool name="Curve"><Curve /></Tool>
    <Tool name="Sun"><Sun /></Tool>
    <Tool name="Rise and set"><Sunrise /></Tool>
    <Tool name="Moon"><Night /></Tool>
    <Tool name="Ephemeris"><Trail plain /></Tool>
    <Tool name="Camera"><Camera /></Tool>
    <Separator />
    <Tool name="CCD frame"><Ccd /></Tool>
    <Tool name="DSS"><Dss /></Tool>
  </ToolBar>
);

const fields = ["120°", "90°", "60°", "30°", "10°", "5°", "2°", "1°", "30'", "10'", "5'", "1'"];

const FieldTools = () => (
  <ToolBar role="toolbar" aria-label="Field">
    <Tool name="G" $color="#00107c">G</Tool>
    <Separator />
    {fields.map(f => <Tool key={f} name={f}>{f}</Tool>)}
    <Separator />
    <Tool name="M1" $color="#700808" $size={11}>M1</Tool>
    <Tool name="M2" $color="#848484" $size={11}>M2</Tool>
    <Tool name="M3" $color="#848484" $size={11}>M3</Tool>
    <Separator />
    <ToolInput aria-label="Angle" $w={48} />
    <Separator />
    <Tool name="Flip horizontally"><FlipH /></Tool>
    <Tool name="Flip vertically"><FlipV /></Tool>
    <ToolInput aria-label="Rotation" $w={48} />
    <Tool name="Clear"><Icon><path d="M4 4L14 14M14 4L4 14" strokeWidth="1.800" /></Icon></Tool>
    <Separator />
    {["t−", "t+", "t="].map(t => <Tool key={t} name={t} $color="#781078" $size={13}>{t}</Tool>)}
    <Gap />
    <ToolInput aria-label="Step" defaultValue="1" $w={32} />
    <UnitPicker>
      <UnitSelect aria-label="Step unit" defaultValue="Hour">
        <option>Hour</option>
        <option>Day</option>
      </UnitSelect>
      <svg viewBox="0 0 13 13" aria-hidden="true"><path d="M3 5H10L6.500 8.500Z" /></svg>
    </UnitPicker>
  </ToolBar>
);

const InfoPanel = () => (
  <Panel>
    <Section $pb={5} $mb={4}>
      <Row $cols="157px 1fr" $gap={2}>
        <Cell>
          <SearchName>Quick Search</SearchName>
          <Box defaultValue="moon" $tone="yellow" />
        </Cell>
        <PushButton type="button">?</PushButton>
      </Row>
    </Section>
    <Section $pb={4} $mb={3}>
      <Coords sets={[["α", ["3", "24", "16"]], ["δ", ["22", "41", "15"]]]} />
      <Coords sets={[["X", ["120", "0", "0"]], ["Y", ["", "", ""]]]} />
    </Section>
    <Row $cols="157px 1fr" $gap={2}>
      <Box aria-label="Object" defaultValue="Star" readOnly $red $bold />
      <PushButton type="button">I</PushButton>
    </Row>
    <Row $cols="1fr 17px 17px" $gap={0}>
      <Field label="Catalogue" value="UCAC4" bold />
      <PushButton type="button" aria-label="Centre object"><Rays color="#333" /></PushButton>
      <PushButton type="button" aria-label="Centre and zoom"><Rays color="#f04040" /></PushButton>
    </Row>
    <Row $cols="1fr 34px" $gap={0}>
      <Field label="Designation in catalogue" value="497-054347" tone="sky" />
      <PushButton type="button" aria-label="Print"><Printer /></PushButton>
    </Row>
    <Row>
      <Field label="RA (J2000)" value="09h 58m 49.66s" />
      <Field label="DE (J2000)" value={`+09° 23' 41.94"`} />
    </Row>
    <Row $cols="1fr 15px 1fr 15px">
      <Field label="Azimuth" value={`+153° 03' 01"`} tone="gray" red />
      <PushButton type="button" aria-label="Azimuth details">.</PushButton>
      <Field label="Altitude" value={`+49° 08' 52"`} tone="gray" red />
      <PushButton type="button" aria-label="Altitude details">.</PushButton>
    </Row>
    <Row $cols="88fr 52fr 35fr">
      <Field label="Hour Angle" value="-01h 08m 35s" tone="gray" red />
      <Field label="Magnitude" value="13.177" />
      <Field label="S.T." tone="off" />
    </Row>
    <Row $cols="1fr 1fr 1fr">
      <Field label="Rise (UT)" value="17h32m" tone="gray" red />
      <Field label="Transit (UT)" value="00h19m" tone="gray" red />
      <Field label="Set (UT)" value="07h03m" tone="gray" red />
    </Row>
    <Row>
      <Field label="RA Epoch" value="2000.98" />
      <Field label="DE Epoch" value="2000.81" />
    </Row>
    <Row>
      <Field label="B, V, g, r and i Mags" value="14.101 / 13.301 / 13.6" />
      <Field label="J, H_Ks Mags" value="12.017 / 11.679 / 11.6" />
    </Row>
    <Row>
      <Field label="JHKs cc_flg/ph_flg" value="0, 0, 0 / 5, 5, 5" />
      <Field label="JHKs phot. Err." value="0.03 / 0.02 / 0.02" />
    </Row>
    <Row $cols="1fr">
      <Field label="Object Type" value="0 - clean star" />
    </Row>
    <Row $cols="33fr 69fr 36fr 36fr">
      <Field label="Lumin." tone="off" />
      <Field label="Mag. Error" value="0.07" />
      <Field label="DST" value="0" />
      <Field label="DSF" value="0" />
    </Row>
    <Row $cols="33fr 32fr 32fr 38fr 38fr">
      <Field label="Fit M." value="13.17" />
      <Field label="Aper." value="13.14" />
      <Field label="Surf.B." tone="off" />
      <Field label="RA Err." value="18" />
      <Field label="DE Err." value="24" />
    </Row>
    <Row $cols="44fr 45fr 45fr 40fr">
      <Field label="RA pm" value="-3.9" />
      <Field label="DE pm" value="-12.3" />
      <Field label="Er RA pm" value="2.1" />
      <Field label="Er DE pm" value="2.6" />
    </Row>
    <FieldName>Other Information</FieldName>
  </Panel>
);

const Status = () => (
  <StatusBar>
    <Ready>Ready</Ready>
    <StatusSet id="ra" label="RA:" values={["09", "58", "40"]} />
    <StatusSet id="de" label="DE:" values={["+09", "21", "16"]} wide={24} />
    <StatusSet id="fov" label="Field:" values={["01", "27", "19"]} wide={24} />
    <StatusGroup><Lamp /><Lamp /></StatusGroup>
    <Clock>
      <ClockDate>02/05/2025 23:10:57</ClockDate>
      +8°28'23" / +47°20'31"
    </Clock>
    <StatusGroup><MoonPhase /></StatusGroup>
    <Sliders>
      <Slider type="range" aria-label="Stars" defaultValue="54" />
      <Slider type="range" aria-label="Objects" defaultValue="5" />
    </Sliders>
    <StepButton type="button" aria-label="More">+</StepButton>
    <StepButton type="button" aria-label="Less">−</StepButton>
    <Julian>JD: 2460712.46594<br />ST: 08:50:14</Julian>
    <Cursor>09h59m55s  +09°26'30"</Cursor>
  </StatusBar>
);

const menus = ["File", "Edit", "View", "Tools", "Images", "Telescope", "Help"];

const App = () => (
  <>
    <GlobalStyle />
    <Window>
      <TitleBar>
        <Logo />
        <Title>C2A</Title>
        <Caption type="button" aria-label="Minimize"><svg width="11" height="11"><path d="M0 5.500H11" stroke="#000" /></svg></Caption>
        <Caption type="button" aria-label="Maximize"><svg width="11" height="11"><rect x="0.500" y="0.500" width="9" height="9" rx="1" fill="none" stroke="#000" /></svg></Caption>
        <Caption type="button" aria-label="Close"><svg width="11" height="11"><path d="M0.500 0.500L10.500 10.500M10.500 0.500L0.500 10.500" stroke="#000" /></svg></Caption>
      </TitleBar>
      <MenuBar>
        {menus.map(m => <MenuItem key={m} type="button">{m}</MenuItem>)}
      </MenuBar>
      <MainTools />
      <FieldTools />
      <Body>
        <InfoPanel />
        <Sky>
          <SkyChart />
          <Overlay>
            <SkyTab type="button" $on>Field</SkyTab>
            <SkyTab type="button">Horizon</SkyTab>
          </Overlay>
          <Overlay $right>
            <Badge>UCAC4</Badge>
            <Badge $green>RNGCIC</Badge>
          </Overlay>
        </Sky>
      </Body>
      <Status />
    </Window>
  </>
);

export default App;
